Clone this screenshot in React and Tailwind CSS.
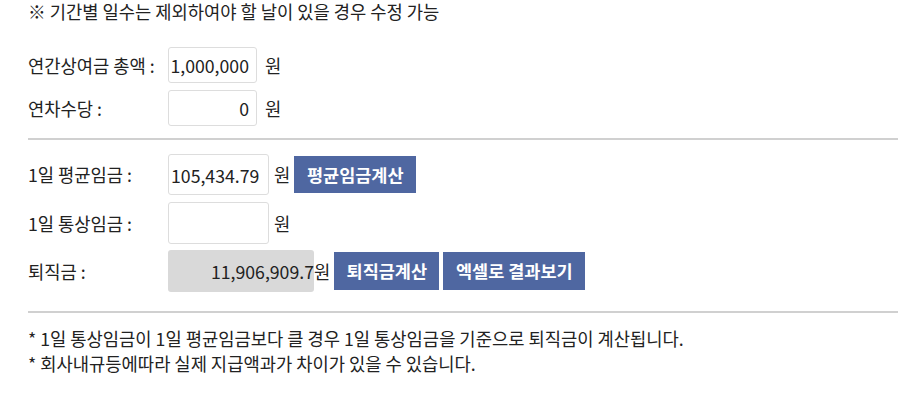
import { useState } from "react";

const FONT = { fontFamily: '"Noto Sans CJK KR", "Noto Sans", sans-serif' };

function Btn({ children, className = "" }) {
  return (
    <button
      className={`bg-[#4f67a1] text-white font-bold text-[17.5px] leading-none px-[12px] ${className}`}
    >
      {children}
    </button>
  );
}

export default function App() {
  const [bonus, setBonus] = useState("1,000,000");
  const [leave, setLeave] = useState("0");
  const [avgWage, setAvgWage] = useState("105,434.79");
  const [ordWage, setOrdWage] = useState("");

  return (
    <div className="bg-white text-[#222] text-[17.7px] pl-[28px] pr-[12px] pt-[1px] pb-10 w-[910px] h-[403px] overflow-hidden" style={FONT}>
      <p className="leading-[21px]">※ 기간별 일수는 제외하여야 할 날이 있을 경우 수정 가능</p>

      <div className="mt-[25px] flex flex-col gap-[7px]">
        <div className="flex items-center h-[36px]">
          <span className="w-[140px]">연간상여금 총액 :</span>
          <input
            value={bonus}
            onChange={(e) => setBonus(e.target.value)}
            className="w-[89px] h-[36px] border border-[#ddd] rounded-[3px] text-right pr-[7px] outline-none"
          />
          <span className="ml-[8px]">원</span>
        </div>
        <div className="flex items-center h-[36px]">
          <span className="w-[140px]">연차수당 :</span>
          <input
            value={leave}
            onChange={(e) => setLeave(e.target.value)}
            className="w-[89px] h-[36px] border border-[#ddd] rounded-[3px] text-right pr-[7px] outline-none"
          />
          <span className="ml-[8px]">원</span>
        </div>
      </div>

      <div className="mt-[12px] border-t-2 border-[#d0d0d0]" />

      <div className="mt-[14px] flex flex-col gap-[7px]">
        <div className="flex items-center h-[41px]">
          <span className="w-[140px]">1일 평균임금 :</span>
          <input
            value={avgWage}
            onChange={(e) => setAvgWage(e.target.value)}
            className="w-[101px] h-[41px] border border-[#ddd] rounded-[3px] pl-[2px] outline-none"
          />
          <span className="ml-[5px]">원</span>
          <Btn className="ml-[4px] h-[37px] w-[122px]">평균임금계산</Btn>
        </div>
        <div className="flex items-center h-[42px]">
          <span className="w-[140px]">1일 통상임금 :</span>
          <input
            value={ordWage}
            onChange={(e) => setOrdWage(e.target.value)}
            className="w-[101px] h-[42px] border border-[#ddd] rounded-[3px] pl-[2px] outline-none"
          />
          <span className="ml-[5px]">원</span>
        </div>
        <div className="flex items-center h-[42px] -mt-[1px]">
          <span className="w-[140px]">퇴직금 :</span>
          <div className="w-[146px] h-[42px] bg-[#d9d9d9] rounded-[3px] flex items-center justify-end">
            11,906,909.7
          </div>
          <span>원</span>
          <Btn className="ml-[4px] h-[38px] w-[105px]">퇴직금계산</Btn>
          <Btn className="ml-[4px] h-[38px] w-[142px]">엑셀로 결과보기</Btn>
        </div>
      </div>

      <div className="mt-[19px] border-t-2 border-[#d0d0d0]" />

      <div className="mt-[13px] leading-[25px]">
        <p>* 1일 통상임금이 1일 평균임금보다 클 경우 1일 통상임금을 기준으로 퇴직금이 계산됩니다.</p>
        <p>* 회사내규등에따라 실제 지급액과가 차이가 있을 수 있습니다.</p>
      </div>
    </div>
  );
}
